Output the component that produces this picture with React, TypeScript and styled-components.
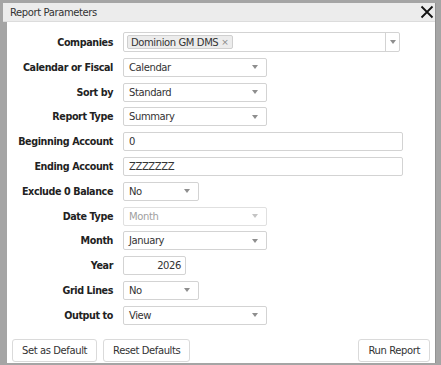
import styled, { createGlobalStyle } from "styled-components";

const GlobalStyle = createGlobalStyle`
  html, body {
    margin: 0;
    padding: 0;
    background: #a5a5a5;
  }
  body {
    font-family: "DejaVu Sans", Verdana, sans-serif;
    font-size: 10px;
    letter-spacing: -0.4px;
    color: #333;
  }
`;

const Page = styled.div`
  width: 441px;
  height: 365px;
  padding: 3px 6px 2px 3px;
  box-sizing: border-box;
`;

const Dialog = styled.div`
  width: 432px;
  height: 360px;
  display: flex;
  flex-direction: column;
  background: #fff;
  box-shadow: 1px 0 0 #939393;
`;

const Header = styled.div`
  height: 19px;
  flex: none;
  display: flex;
  align-items: center;
  justify-content: space-between;
  padding: 0 1px 0 7px;
  background: #ececec;
  border-bottom: 1px solid #dcdcdc;
  box-sizing: border-box;
`;

const Title = styled.span`
  color: #333;
  font-size: 10px;
`;

const Body = styled.div`
  flex: 1;
  display: flex;
  flex-direction: column;
  border-left: 4px solid #a5a5a5;
  padding-top: 10px;
`;

const Form = styled.div`
  display: grid;
  grid-template-columns: 106px auto;
  column-gap: 10px;
  row-gap: 5.8px;
  align-items: center;
  justify-items: start;
`;

const Label = styled.label`
  justify-self: end;
  font-weight: bold;
  color: #222;
  font-size: 9.6px;
  white-space: nowrap;
`;

const Box = styled.div<{ $w: number; $h?: number; $disabled?: boolean }>`
  width: ${(p) => p.$w}px;
  height: ${(p) => p.$h ?? 19}px;
  box-sizing: border-box;
  border: 1px solid #d3d3d3;
  border-radius: 2px;
  background: #fff;
  display: flex;
  align-items: center;
  padding-left: 5px;
  color: ${(p) => (p.$disabled ? "#a0a0a0" : "#333")};
  border-color: ${(p) => (p.$disabled ? "#e0e0e0" : "#d3d3d3")};
`;

const Value = styled.span<{ $right?: boolean }>`
  flex: 1;
  text-align: ${(p) => (p.$right ? "right" : "left")};
  padding-right: ${(p) => (p.$right ? "4px" : "0")};
`;

const Arrow = styled.span<{ $light?: boolean }>`
  width: 0;
  height: 0;
  margin-right: 8px;
  border-left: 3.5px solid transparent;
  border-right: 3.5px solid transparent;
  border-top: 4px solid ${(p) => (p.$light ? "#c4c4c4" : "#8e8e8e")};
`;

const MultiArrow = styled.span`
  width: 13px;
  height: 100%;
  border-left: 1px solid #d3d3d3;
  display: flex;
  align-items: center;
  justify-content: center;
  &::after {
    content: "";
    border-left: 3.5px solid transparent;
    border-right: 3.5px solid transparent;
    border-top: 4px solid #8e8e8e;
  }
`;

const Tags = styled.div`
  flex: 1;
  display: flex;
  align-items: center;
  margin-left: -2px;
`;

const Tag = styled.span`
  display: inline-flex;
  align-items: center;
  gap: 3px;
  height: 14px;
  padding: 0 4px 0 3px;
  background: #ececec;
  border: 1px solid #cfcfcf;
  border-radius: 2px;
  box-sizing: border-box;
  color: #333;
`;

const TagX = styled.span`
  color: #888;
  font-size: 9px;
`;

const Footer = styled.div`
  margin-top: auto;
  display: flex;
  gap: 6px;
  padding: 0 5px 1px 5px;
`;

const Button = styled.button<{ $push?: boolean }>`
  height: 23px;
  padding: 0 9px;
  background: #fff;
  border: 1px solid #dadada;
  border-radius: 3px;
  font-family: "DejaVu Sans", Verdana, sans-serif;
  font-size: 10px;
  letter-spacing: -0.4px;
  color: #333;
  margin-left: ${(p) => (p.$push ? "auto" : "0")};
`;

const CloseIcon = () => (
  <svg width="14" height="14" viewBox="0 0 14 14">
    <path d="M1.5 1.5 L12.5 12.5 M12.5 1.5 L1.5 12.5" stroke="#111" strokeWidth="1.8" />
  </svg>
);

type SelectProps = { w: number; value: string; disabled?: boolean };

const Select = ({ w, value, disabled }: SelectProps) => (
  <Box $w={w} $disabled={disabled}>
    <Value>{value}</Value>
    <Arrow $light={disabled} />
  </Box>
);

export default function App() {
  return (
    <Page>
      <GlobalStyle />
      <Dialog>
        <Header>
          <Title>Report Parameters</Title>
          <CloseIcon />
        </Header>
        <Body>
          <Form>
            <Label>Companies</Label>
            <Box $w={277} $h={20} style={{ paddingRight: 0 }}>
              <Tags>
                <Tag>
                  Dominion GM DMS <TagX>×</TagX>
                </Tag>
              </Tags>
              <MultiArrow />
            </Box>

            <Label>Calendar or Fiscal</Label>
            <Select w={144} value="Calendar" />

            <Label>Sort by</Label>
            <Select w={144} value="Standard" />

            <Label>Report Type</Label>
            <Select w={144} value="Summary" />

            <Label>Beginning Account</Label>
            <Box $w={280}>
              <Value>0</Value>
            </Box>

            <Label>Ending Account</Label>
            <Box $w={280}>
              <Value>ZZZZZZZ</Value>
            </Box>

            <Label>Exclude 0 Balance</Label>
            <Select w={76} value="No" />

            <Label>Date Type</Label>
            <Select w={144} value="Month" disabled />

            <Label>Month</Label>
            <Select w={144} value="January" />

            <Label>Year</Label>
            <Box $w={63}>
              <Value $right>2026</Value>
            </Box>

            <Label>Grid Lines</Label>
            <Select w={76} value="No" />

            <Label>Output to</Label>
            <Select w={144} value="View" />
          </Form>
          <Footer>
            <Button>Set as Default</Button>
            <Button>Reset Defaults</Button>
            <Button $push>Run Report</Button>
          </Footer>
        </Body>
      </Dialog>
    </Page>
  );
}
